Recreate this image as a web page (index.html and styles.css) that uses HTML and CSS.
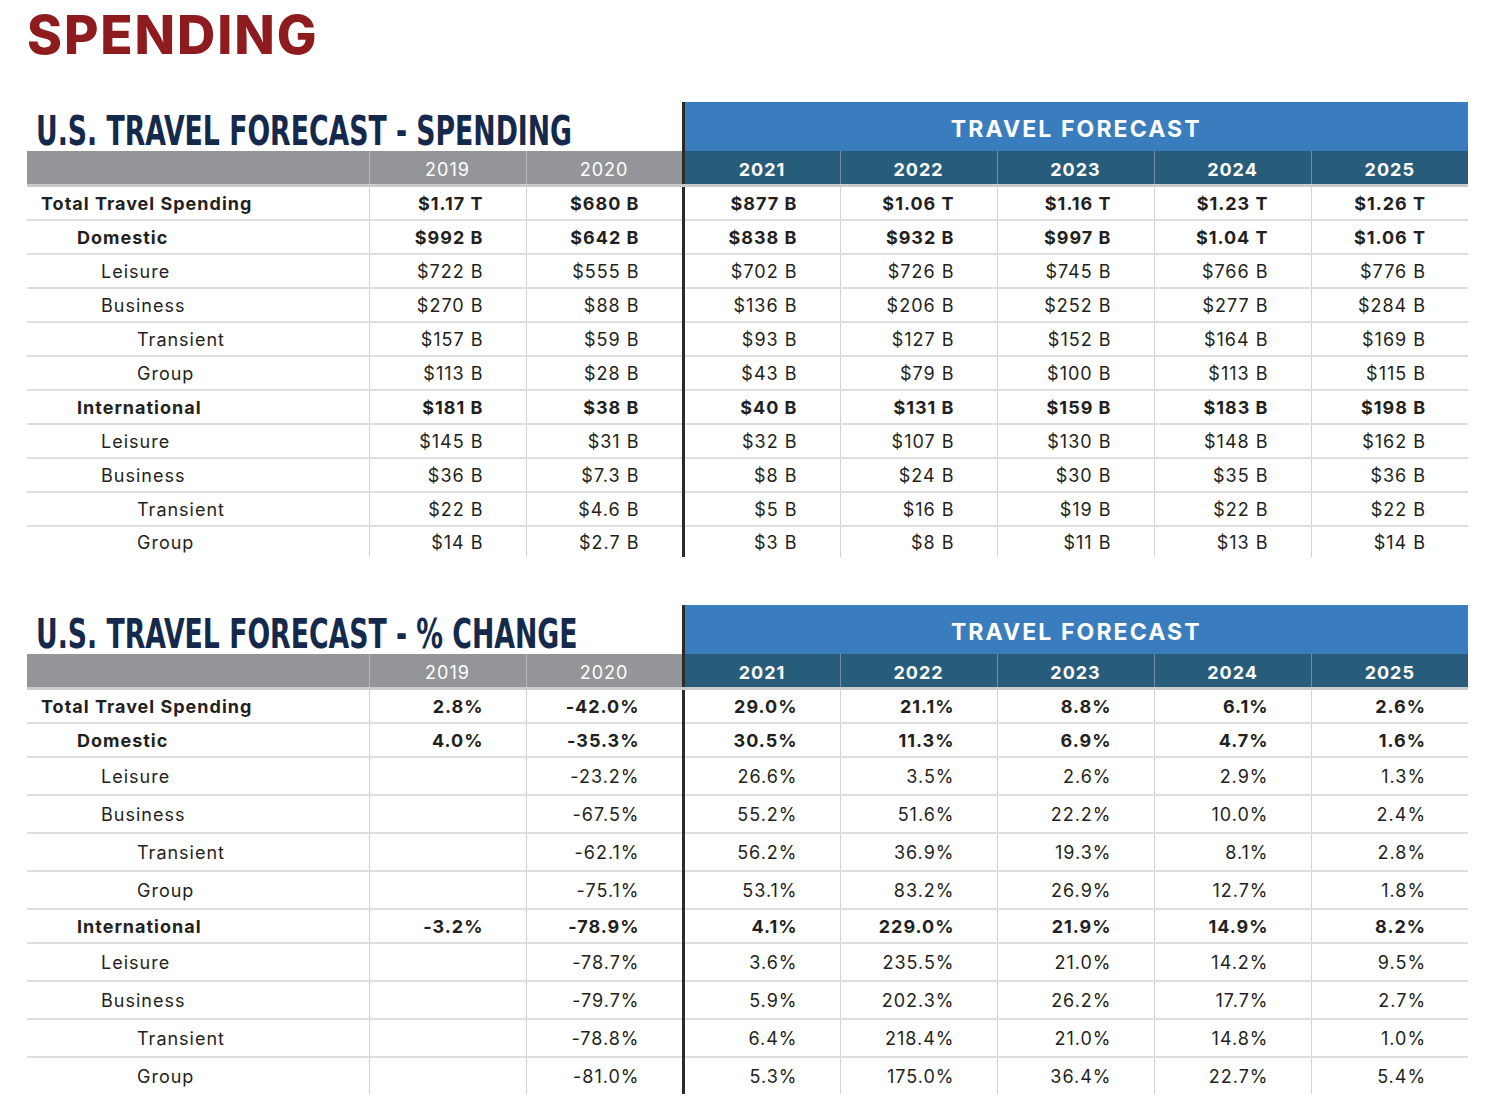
FILE: index.html
```html
<!DOCTYPE html>
<html lang="en">
<head>
<meta charset="utf-8">
<title>Spending</title>
<link rel="stylesheet" href="styles.css">
</head>
<body>
<div class="page">
  <h1 class="page-title">SPENDING</h1>

  <table class="fc-table">
    <colgroup>
      <col class="c-label"><col class="c-num"><col class="c-num"><col class="c-num"><col class="c-num"><col class="c-num"><col class="c-num"><col class="c-num">
    </colgroup>
    <thead>
      <tr class="top">
        <th colspan="3" class="t-title"><span class="title-text">U.S. TRAVEL FORECAST - SPENDING</span></th>
        <th colspan="5" class="t-band fc">TRAVEL FORECAST</th>
      </tr>
      <tr class="years">
        <th class="y-gray y-first"></th>
        <th class="y-gray">2019</th>
        <th class="y-gray">2020</th>
        <th class="y-teal fc">2021</th>
        <th class="y-teal">2022</th>
        <th class="y-teal">2023</th>
        <th class="y-teal">2024</th>
        <th class="y-teal">2025</th>
      </tr>
    </thead>
    <tbody>
      <tr class="bold"><td class="l0">Total Travel Spending</td><td>$1.17 T</td><td>$680 B</td><td class="fc">$877 B</td><td>$1.06 T</td><td>$1.16 T</td><td>$1.23 T</td><td>$1.26 T</td></tr>
      <tr class="bold"><td class="l1">Domestic</td><td>$992 B</td><td>$642 B</td><td class="fc">$838 B</td><td>$932 B</td><td>$997 B</td><td>$1.04 T</td><td>$1.06 T</td></tr>
      <tr><td class="l2">Leisure</td><td>$722 B</td><td>$555 B</td><td class="fc">$702 B</td><td>$726 B</td><td>$745 B</td><td>$766 B</td><td>$776 B</td></tr>
      <tr><td class="l2">Business</td><td>$270 B</td><td>$88 B</td><td class="fc">$136 B</td><td>$206 B</td><td>$252 B</td><td>$277 B</td><td>$284 B</td></tr>
      <tr><td class="l3">Transient</td><td>$157 B</td><td>$59 B</td><td class="fc">$93 B</td><td>$127 B</td><td>$152 B</td><td>$164 B</td><td>$169 B</td></tr>
      <tr><td class="l3">Group</td><td>$113 B</td><td>$28 B</td><td class="fc">$43 B</td><td>$79 B</td><td>$100 B</td><td>$113 B</td><td>$115 B</td></tr>
      <tr class="bold"><td class="l1">International</td><td>$181 B</td><td>$38 B</td><td class="fc">$40 B</td><td>$131 B</td><td>$159 B</td><td>$183 B</td><td>$198 B</td></tr>
      <tr><td class="l2">Leisure</td><td>$145 B</td><td>$31 B</td><td class="fc">$32 B</td><td>$107 B</td><td>$130 B</td><td>$148 B</td><td>$162 B</td></tr>
      <tr><td class="l2">Business</td><td>$36 B</td><td>$7.3 B</td><td class="fc">$8 B</td><td>$24 B</td><td>$30 B</td><td>$35 B</td><td>$36 B</td></tr>
      <tr><td class="l3">Transient</td><td>$22 B</td><td>$4.6 B</td><td class="fc">$5 B</td><td>$16 B</td><td>$19 B</td><td>$22 B</td><td>$22 B</td></tr>
      <tr class="last"><td class="l3">Group</td><td>$14 B</td><td>$2.7 B</td><td class="fc">$3 B</td><td>$8 B</td><td>$11 B</td><td>$13 B</td><td>$14 B</td></tr>
    </tbody>
  </table>

  <table class="fc-table second">
    <colgroup>
      <col class="c-label"><col class="c-num"><col class="c-num"><col class="c-num"><col class="c-num"><col class="c-num"><col class="c-num"><col class="c-num">
    </colgroup>
    <thead>
      <tr class="top">
        <th colspan="3" class="t-title"><span class="title-text">U.S. TRAVEL FORECAST - % CHANGE</span></th>
        <th colspan="5" class="t-band fc">TRAVEL FORECAST</th>
      </tr>
      <tr class="years">
        <th class="y-gray y-first"></th>
        <th class="y-gray">2019</th>
        <th class="y-gray">2020</th>
        <th class="y-teal fc">2021</th>
        <th class="y-teal">2022</th>
        <th class="y-teal">2023</th>
        <th class="y-teal">2024</th>
        <th class="y-teal">2025</th>
      </tr>
    </thead>
    <tbody>
      <tr class="bold"><td class="l0">Total Travel Spending</td><td>2.8%</td><td>-42.0%</td><td class="fc">29.0%</td><td>21.1%</td><td>8.8%</td><td>6.1%</td><td>2.6%</td></tr>
      <tr class="bold"><td class="l1">Domestic</td><td>4.0%</td><td>-35.3%</td><td class="fc">30.5%</td><td>11.3%</td><td>6.9%</td><td>4.7%</td><td>1.6%</td></tr>
      <tr class="tall"><td class="l2">Leisure</td><td></td><td>-23.2%</td><td class="fc">26.6%</td><td>3.5%</td><td>2.6%</td><td>2.9%</td><td>1.3%</td></tr>
      <tr class="tall"><td class="l2">Business</td><td></td><td>-67.5%</td><td class="fc">55.2%</td><td>51.6%</td><td>22.2%</td><td>10.0%</td><td>2.4%</td></tr>
      <tr class="tall"><td class="l3">Transient</td><td></td><td>-62.1%</td><td class="fc">56.2%</td><td>36.9%</td><td>19.3%</td><td>8.1%</td><td>2.8%</td></tr>
      <tr class="tall"><td class="l3">Group</td><td></td><td>-75.1%</td><td class="fc">53.1%</td><td>83.2%</td><td>26.9%</td><td>12.7%</td><td>1.8%</td></tr>
      <tr class="bold"><td class="l1">International</td><td>-3.2%</td><td>-78.9%</td><td class="fc">4.1%</td><td>229.0%</td><td>21.9%</td><td>14.9%</td><td>8.2%</td></tr>
      <tr class="tall"><td class="l2">Leisure</td><td></td><td>-78.7%</td><td class="fc">3.6%</td><td>235.5%</td><td>21.0%</td><td>14.2%</td><td>9.5%</td></tr>
      <tr class="tall"><td class="l2">Business</td><td></td><td>-79.7%</td><td class="fc">5.9%</td><td>202.3%</td><td>26.2%</td><td>17.7%</td><td>2.7%</td></tr>
      <tr class="tall"><td class="l3">Transient</td><td></td><td>-78.8%</td><td class="fc">6.4%</td><td>218.4%</td><td>21.0%</td><td>14.8%</td><td>1.0%</td></tr>
      <tr class="tall last"><td class="l3">Group</td><td></td><td>-81.0%</td><td class="fc">5.3%</td><td>175.0%</td><td>36.4%</td><td>22.7%</td><td>5.4%</td></tr>
    </tbody>
  </table>
</div>
</body>
</html>
```
FILE: styles.css
```css
html, body {
  margin: 0;
  padding: 0;
  background: #ffffff;
}

body {
  font-family: Inter, "Open Sans", "DejaVu Sans", sans-serif;
  color: #231f20;
}

.page {
  padding: 0 19px 0 27px;
}

.page-title {
  margin: 4px 0 0 0;
  font-size: 53px;
  line-height: 63px;
  font-weight: 800;
  color: #8e1c1f;
  letter-spacing: 1.9px;
}

.fc-table {
  margin-top: 35px;
  width: 1440px;
  table-layout: fixed;
  border-collapse: collapse;
  border-spacing: 0;
}

.fc-table.second {
  margin-top: 48px;
}

.c-label { width: 342px; }
.c-num { width: 157px; }

/* top band row */
.t-title {
  height: 49px;
  padding: 0;
  text-align: left;
  vertical-align: bottom;
  white-space: nowrap;
  overflow: visible;
}

.title-text {
  display: inline-block;
  font-family: "DejaVu Sans Condensed", "DejaVu Sans", sans-serif;
  font-stretch: condensed;
  font-weight: 700;
  font-size: 40px;
  line-height: 40px;
  color: #14294b;
  margin-left: 9px;
  transform: scaleX(0.742);
  transform-origin: left bottom;
}

.t-band {
  height: 49px;
  padding: 14px 0 0 0;
  box-sizing: border-box;
  vertical-align: top;
  background: #3a7dbf;
  color: #ffffff;
  font-size: 23px;
  line-height: 26px;
  font-weight: 700;
  letter-spacing: 2.1px;
  text-align: center;
}

/* year header row */
.years th {
  height: 30px;
  padding: 3px 0 0 0;
  font-size: 18px;
  color: #ffffff;
  text-align: center;
  vertical-align: middle;
  border-bottom: 3px solid #cbcbcb;
  letter-spacing: 1px;
}

.y-gray {
  background: #939598;
  font-weight: 400;
  border-left: 1px solid #b7b8ba;
}

.y-first {
  border-left: none;
}

.y-teal {
  background: #285c7b;
  font-weight: 700;
  border-left: 1px solid #6f8ea3;
}

/* body rows */
.fc-table td {
  height: 32px;
  padding: 0 42px 0 0;
  font-size: 18px;
  letter-spacing: 1px;
  text-align: right;
  vertical-align: middle;
  white-space: nowrap;
  border-left: 1px solid #d3d3d3;
  border-bottom: 2px solid #dedede;
}

.fc-table tr.tall td {
  height: 36px;
}

.fc-table tr.last td {
  border-bottom: none;
  height: 30px;
}

.fc-table tr.tall.last td {
  height: 36px;
}

.fc-table tr.bold td {
  font-weight: 700;
}

.fc-table td.l0,
.fc-table td.l1,
.fc-table td.l2,
.fc-table td.l3 {
  text-align: left;
  border-left: none;
  padding-right: 0;
}

.fc-table td.l0 { padding-left: 14px; }
.fc-table td.l1 { padding-left: 50px; }
.fc-table td.l2 { padding-left: 74px; }
.fc-table td.l3 { padding-left: 110px; }

.fc-table .fc {
  border-left: 3px solid #2b2b2b;
}
```
